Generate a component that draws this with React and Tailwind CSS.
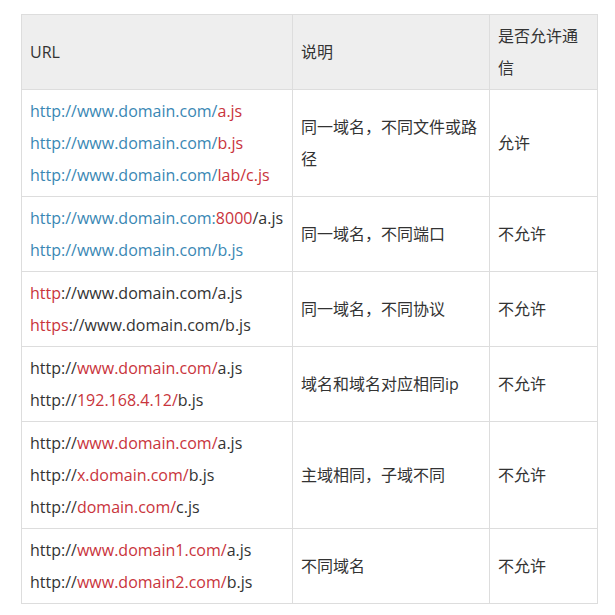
import React from "react";

const B = ({ children }) => <span className="text-[#3a87b4]">{children}</span>;
const R = ({ children }) => <span className="text-[#c9343c]">{children}</span>;

const rows = [
  {
    urls: [
      <><B>http://www.domain.com/</B><R>a.js</R></>,
      <><B>http://www.domain.com/</B><R>b.js</R></>,
      <><B>http://www.domain.com/</B><R>lab/c.js</R></>,
    ],
    desc: "同一域名，不同文件或路径",
    ok: "允许",
  },
  {
    urls: [
      <><B>http://www.domain.com:</B><R>8000</R>/a.js</>,
      <><B>http://www.domain.com/b.js</B></>,
    ],
    desc: "同一域名，不同端口",
    ok: "不允许",
  },
  {
    urls: [
      <><R>http</R>://www.domain.com/a.js</>,
      <><R>https</R>://www.domain.com/b.js</>,
    ],
    desc: "同一域名，不同协议",
    ok: "不允许",
  },
  {
    urls: [
      <>http://<R>www.domain.com/</R>a.js</>,
      <>http://<R>192.168.4.12/</R>b.js</>,
    ],
    desc: "域名和域名对应相同ip",
    ok: "不允许",
  },
  {
    urls: [
      <>http://<R>www.domain.com/</R>a.js</>,
      <>http://<R>x.domain.com/</R>b.js</>,
      <>http://<R>domain.com/</R>c.js</>,
    ],
    desc: "主域相同，子域不同",
    ok: "不允许",
  },
  {
    urls: [
      <>http://<R>www.domain1.com/</R>a.js</>,
      <>http://<R>www.domain2.com/</R>b.js</>,
    ],
    desc: "不同域名",
    ok: "不允许",
  },
];

export default function App() {
  const cell = "border border-[#dddddd] px-[8px] py-[5px] align-middle text-left font-normal";
  return (
    <div
      className="bg-white min-h-[615px] pl-[21px] pt-[14px] text-[16px] leading-[32px] text-[#333333]"
      style={{ fontFamily: '"Open Sans", "Noto Sans CJK SC", sans-serif' }}
    >
      <table className="border-collapse table-fixed w-[576px]">
        <colgroup>
          <col className="w-[271px]" />
          <col className="w-[197px]" />
          <col className="w-[108px]" />
        </colgroup>
        <thead>
          <tr className="bg-[#eeeeee] h-[75px]">
            <th className={cell}>URL</th>
            <th className={cell}>说明</th>
            <th className={cell}>是否允许通信</th>
          </tr>
        </thead>
        <tbody>
          {rows.map((r, i) => (
            <tr key={i}>
              <td className={cell}>
                {r.urls.map((u, j) => (
                  <div key={j} className="whitespace-nowrap">{u}</div>
                ))}
              </td>
              <td className={cell}>{r.desc}</td>
              <td className={cell}>{r.ok}</td>
            </tr>
          ))}
        </tbody>
      </table>
    </div>
  );
}
